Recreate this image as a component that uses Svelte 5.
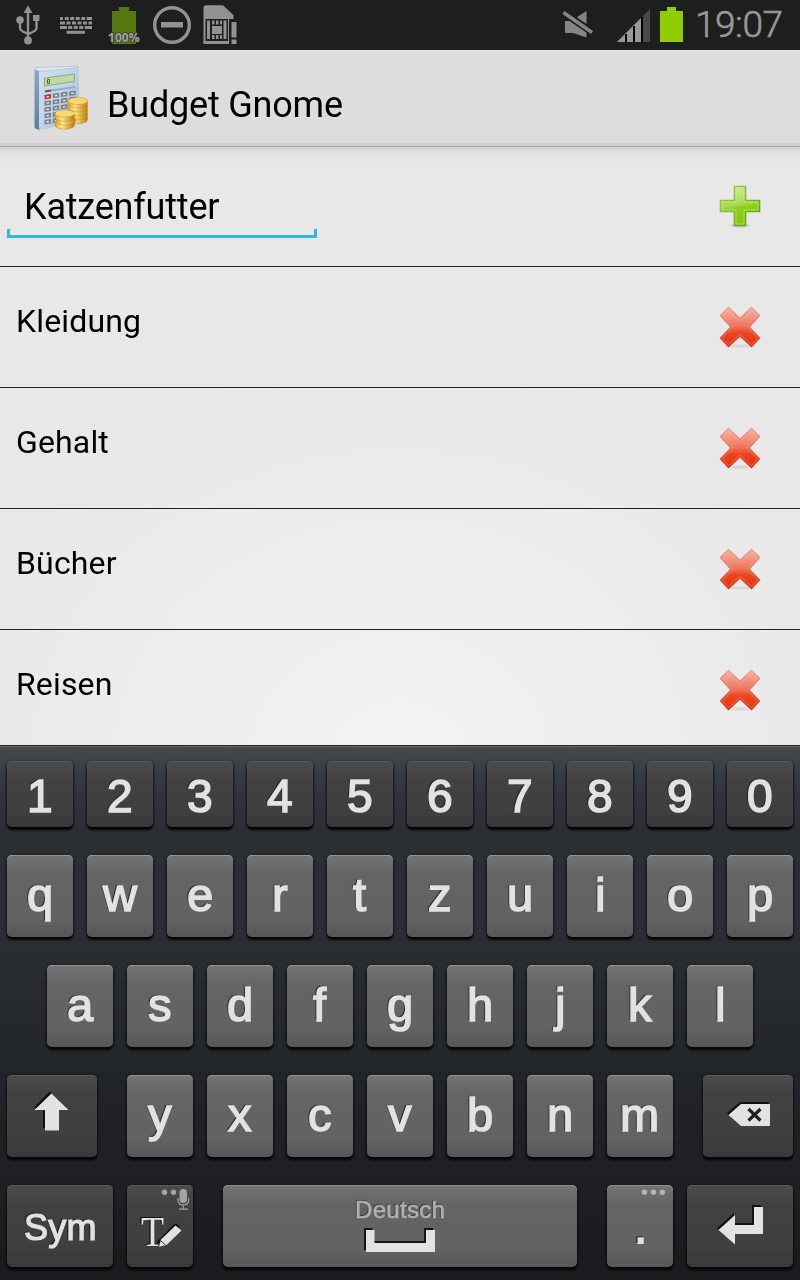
<script>
  const categories = ['Kleidung', 'Gehalt', 'Bücher', 'Reisen'];
  const digits = [...'1234567890'];
  const top = [...'qwertzuiop'];
  const home = [...'asdfghjkl'];
  const bottom = [...'yxcvbnm'];
  const calcRows = [97, 103.2, 109.5, 115.8, 122];
  const calcCols = [0, 1, 2, 3];
</script>

<div class="screen">
  <header class="status">
    <svg width="250" height="50" viewBox="0 0 250 50">
      <g fill="none" stroke="#929292" stroke-width="2.400">
        <path d="M28 10V40M20 20v8q0 2 2 3l6 3M36.500 19v9q0 2-2 3l-6 3" />
        <circle cx="172" cy="25" r="17.300" stroke-width="3.400" />
      </g>
      <g fill="#929292">
        <path d="M28 5.500l4.500 7.500h-9zM33 15h6.500v6H33z" />
        <circle cx="20" cy="20" r="3.800" /><circle cx="28" cy="40.500" r="3.900" />
        <path d="M161 22h22v5.500h-22z" />
      </g>
      <g stroke="#929292" stroke-width="3" fill="none">
        <path d="M60 18.500h32" stroke-dasharray="3 1.700 4 1.500 4 1.500 4 1.500 4 1.500 5.300 9" />
        <path d="M60 23h32" stroke-dasharray="5 1.500 4 1.500 4 1.500 4 1.500 4 1.500 3.500 9" />
        <path d="M60 27.500h32" stroke-dasharray="7 1.200 4 1.500 4 1.500 4 1.500 7.300 9" />
        <path d="M66.500 32.300h18.500" />
      </g>
      <path d="M119 7h10v4h7v33h-24V11h7z" fill="#57780e" />
      <text x="123.800" y="42" text-anchor="middle" class="pct">100%</text>
      <path d="M206 5.300h17l10.500 10V19H229v25h-23q-2.500 0-2.500-2V8q0-2.700 2.500-2.700z" fill="#929292" />
      <path d="M205.500 19h22.500v22h-22.500z" fill="#1e1e1e" />
      <g fill="#929292">
        <path d="M207 20.500h3v18.500h-3zM223.500 20.500h3v18.500h-3zM212 20.500h2.500v4H212zM216 20.500h2.500v4H216zM220 20.500h2v4h-2zM212 35h2.500v4H212zM216 35h2.500v4H216zM220 35h2v4h-2zM212 26h10v8h-10z" />
        <path d="M203.500 41h25.500v3h-25.500zM231.500 22h5v15.500h-5zM231.500 39.500h5V44h-5z" />
      </g>
    </svg>
    <svg class="right" width="250" height="50" viewBox="550 0 250 50">
      <path d="M565 21h6l15.500-10v26.500L573 33h-8z" fill="#858585" />
      <path d="M564 13l28 19" stroke="#1e1e1e" stroke-width="7" />
      <path d="M563.500 12.500L592 32.500" stroke="#858585" stroke-width="3.500" />
      <path d="M617 42l33-33v33z" fill="#484848" />
      <path d="M617 42l25-25v25z" fill="#999" />
      <path d="M625 34h2v8h-2zM633 26h2v16h-2zM641 17h2v25h-2z" fill="#000" />
      <path d="M667 7h9v4h7v31h-23V11h7z" fill="#8fcd00" />
      <text x="695" y="37" class="clock" textLength="88" lengthAdjust="spacing">19:07</text>
    </svg>
  </header>

  <div class="appbar">
    <svg class="logo" width="60" height="68" viewBox="30 64 60 68">
      <defs>
        <linearGradient id="body" x2="1" y2="1"><stop stop-color="#d3e1ef" /><stop offset=".5" stop-color="#c0d3e8" /><stop offset="1" stop-color="#8fafcf" /></linearGradient>
        <linearGradient id="side" y2="1" x2="0"><stop stop-color="#91a9c0" /><stop offset="1" stop-color="#5c7c9e" /></linearGradient>
        <linearGradient id="gold"><stop stop-color="#e1a528" /><stop offset=".35" stop-color="#ffe58a" /><stop offset="1" stop-color="#bd7d0a" /></linearGradient>
      </defs>
      <path d="M34.500 69.500l5 1.500v59l-4-1.500q-1-.5-1-2z" fill="url(#side)" />
      <path d="M39 70.500l38-3.500q2 0 2 2v53l-37 7.500q-3 .5-3-2z" fill="url(#body)" />
      <path d="M34.500 69.500q0-1.500 3-2l37.500-1.300q3 0 4 1.500L40 71.500z" fill="#dce9f3" stroke="#91abc2" stroke-width=".5" />
      <path d="M44.500 78l30-4v7.500l-30 4.500z" fill="#bfdba0" stroke="#809b71" stroke-width=".8" />
      <path d="M47.500 79.500l2-.3v4.300l-2 .3z" fill="none" stroke="#4c663a" />
      <path d="M45 91.500l30-4.500" stroke="#9ba9b8" stroke-width="2" />
      <path d="M45 91.500l6-1" stroke="#59616b" stroke-width="2" />
      {#each calcRows as y, r}
        {#each calcCols as c}
          <path d={`M${44.5 + c * 8.2} ${y - 2 - c * 1.2}l6.500-1v4.500l-6.500 1z`} fill={r === 0 && c === 0 ? '#d22b32' : '#7d828b'} />
          <path d={`M${46.5 + c * 8.2} ${y - c * 1.2}l2.500-.4`} stroke="#e8ebef" stroke-width="1.300" />
        {/each}
      {/each}
      <g fill="url(#gold)" stroke="#ba7d13" stroke-width=".4">
        {#each [119, 115, 111, 107, 103] as y}
          <path d={`M68 ${y - 2}v3c1 5 18 5 19.500 0v-3z`} />
        {/each}
        <ellipse cx="77.700" cy="101" rx="9.800" ry="3.600" fill="#f7d66b" />
        {#each [124.500, 120.500, 116.500] as y, i}
          <path d={`M${55 + (i % 2)} ${y - 2}v3c1 5 18 5 19.500 0v-3z`} />
        {/each}
        <ellipse cx="64.800" cy="113.500" rx="9.800" ry="3.600" fill="#f9da75" />
      </g>
    </svg>
    <h1>Budget Gnome</h1>
  </div>

  <main>
    <div class="row entry">
      <div class="field"><span>Katzenfutter</span></div>
      <svg class="action" width="44" height="48" viewBox="0 0 44 48">
        <defs>
          <linearGradient id="green" x1=".4" y1="0" x2=".6" y2="1"><stop stop-color="#d2ec91" /><stop offset=".45" stop-color="#a8d850" /><stop offset=".55" stop-color="#8bcf16" /><stop offset="1" stop-color="#80ca0c" /></linearGradient>
          <linearGradient id="rim" x2="1" y2="1"><stop stop-color="#a5cf58" /><stop offset="1" stop-color="#559b0b" /></linearGradient>
          <radialGradient id="shade"><stop stop-color="#777" stop-opacity=".55" /><stop offset="1" stop-color="#777" stop-opacity="0" /></radialGradient>
        </defs>
        <ellipse cx="22" cy="41.500" rx="12" ry="2.500" fill="url(#shade)" />
        <path d="M16.500 2.500h11v14h14v11h-14v14h-11v-14h-14v-11h14z" fill="url(#green)" stroke="url(#rim)" stroke-width="1.700" stroke-linejoin="round" />
        <path d="M18 4h8v14h14v8H26v14h-8V26H4v-8h14z" fill="none" stroke="#d7f09c" stroke-opacity=".55" />
      </svg>
    </div>
    {#each categories as name}
      <div class="row">
        <span class="name">{name}</span>
        <svg class="action" width="44" height="48" viewBox="0 0 44 48">
          <defs>
            <linearGradient id="red" x2="0" y2="1"><stop stop-color="#f9b6a7" /><stop offset=".48" stop-color="#ef745a" /><stop offset=".66" stop-color="#ea4520" /><stop offset="1" stop-color="#e92d08" /></linearGradient>
            <linearGradient id="redrim" x2="0" y2="1"><stop stop-color="#efa092" /><stop offset="1" stop-color="#ca3c27" /></linearGradient>
          </defs>
          <ellipse cx="22" cy="41" rx="18" ry="2.500" fill="url(#shade)" opacity=".4" />
          <path d="M10.500 2.500L22 13.500 33.500 2.500l8 8L31 22l10.500 11-8 8.500L22 31 10.500 41.500l-8-8.500L13 22 2.500 10.500z" fill="url(#red)" stroke="url(#redrim)" stroke-width="1.400" stroke-linejoin="round" />
          <path d="M10.500 4.500L22 15.500 33.500 4.500l6 6L29 22l10.500 11-6 6.500L22 29 10.500 39.500l-6-6.500L15 22 4.500 10.500z" fill="none" stroke="#ffc0ad" stroke-opacity=".3" />
        </svg>
      </div>
    {/each}
  </main>

  <section class="keyboard">
    <div class="keys digits">
      {#each digits as k}<div class="key dark"><span>{k}</span></div>{/each}
    </div>
    <div class="keys">
      {#each top as k}<div class="key"><span>{k}</span></div>{/each}
    </div>
    <div class="keys home">
      {#each home as k}<div class="key"><span>{k}</span></div>{/each}
    </div>
    <div class="keys spread">
      <div class="key dark shift">
        <svg width="90" height="82" viewBox="7 1075 90 82">
          <path d="M49.500 1091.500l17 16.500H57v20H43v-20h-9.500z" fill="#111" />
          <path d="M51.500 1093.500l17 16.500H59v20.500H45V1110h-10.500z" fill="#e2e2e2" />
        </svg>
      </div>
      <div class="group">
        {#each bottom as k}<div class="key"><span>{k}</span></div>{/each}
      </div>
      <div class="key dark shift">
        <svg width="90" height="82" viewBox="703 1075 90 82">
          <path d="M727 1113l13-11h28.500v3H741l-12.500 10z" fill="#111" />
          <path d="M728.500 1115l12.500-11h29v22h-29z" fill="#e2e2e2" />
          <path d="M748.500 1109l12 11.500M760.500 1109l-12 11.500" stroke="#222" stroke-width="3.200" />
        </svg>
      </div>
    </div>
    <div class="keys last">
      <div class="key dark wide"><span class="sym">Sym</span></div>
      <div class="key dark">
        <svg width="66" height="82" viewBox="127 1185 66 82">
          <g fill="#a4a4a4">
            <circle cx="164.500" cy="1192.300" r="2.700" /><circle cx="173.500" cy="1192.300" r="2.700" />
            <rect x="179.500" y="1189" width="7.500" height="14" rx="3.700" />
            <path d="M178 1198v2q0 5 5.300 5t5.300-5v-2M183.300 1205v4M179 1209.200h9" fill="none" stroke="#a4a4a4" stroke-width="1.200" />
          </g>
          <text class="tee shadow" x="139.500" y="1244.500" textLength="23" lengthAdjust="spacingAndGlyphs">T</text>
          <text class="tee" x="141" y="1246" textLength="23" lengthAdjust="spacingAndGlyphs">T</text>
          <path d="M156.500 1242l18-18 2-.5 3 3-18 19z" fill="#111" />
          <path d="M161 1239.500l14.500-14 6 5-15 14.500-7.500 1.800z" fill="#e2e2e2" />
          <path d="M160.500 1240.500l5.500 5" stroke="#333" stroke-width="1" />
        </svg>
      </div>
      <div class="key space">
        <span class="lang">Deutsch</span>
        <svg width="72" height="25" viewBox="364 1228 72 25">
          <path d="M364 1228h8.500v13H424v-13h9v22h-69z" fill="#151515" />
          <path d="M366 1230h8.500v13h51.500v-13h9v22h-69z" fill="#e2e2e2" />
        </svg>
      </div>
      <div class="key">
        <svg width="66" height="82" viewBox="607 1185 66 82">
          <g fill="#b4b4b4"><circle cx="644.500" cy="1192.300" r="2.700" /><circle cx="653.400" cy="1192.300" r="2.700" /><circle cx="662.300" cy="1192.300" r="2.700" /></g>
          <text class="dot shadow" x="639.300" y="1242.500">.</text>
          <text class="dot" x="640.500" y="1244">.</text>
        </svg>
      </div>
      <div class="key dark wide">
        <svg width="106" height="82" viewBox="687 1185 106 82">
          <path d="M717 1228l17-15v10h18v-18h9v26h-27v10z" fill="#111" />
          <path d="M718.500 1230l16.500-15v10h19v-18h9v27h-28v10.500z" fill="#e2e2e2" />
        </svg>
      </div>
    </div>
  </section>
</div>

<style>
  :global(body) { margin: 0; }
  .screen { width: 800px; height: 1280px; overflow: hidden; display: flex; flex-direction: column; font-family: Roboto, sans-serif; color: #000; background: #e8e8e8; }
  svg { display: block; flex: none; }
  h1, .name, .field span, .key span, .key svg { will-change: transform; }
  .status { height: 50px; flex: none; display: flex; justify-content: space-between; background: #1e1e1e; }
  .pct { font: 700 12px "Open Sans", sans-serif; fill: #a5a5a5; stroke: #333; stroke-width: 1.5px; paint-order: stroke; }
  .clock { font: 300 37px Roboto, sans-serif; fill: #999; stroke: #999; stroke-width: .6px; }
  .appbar { box-sizing: border-box; height: 97px; flex: none; display: flex; align-items: flex-start; padding: 14px 0 0 30px; background: linear-gradient(#e4e4e4, #dddddd 2px, #dddddd 93px, #cfcfcf 93px, #cfcfcf 96px, #a2a2a2 96px); }
  h1 { margin: 20px 0 0 17px; font-weight: 400; font-size: 36px; line-height: 42px; letter-spacing: -.2px; }
  main { height: 598px; flex: none; overflow: hidden; background: linear-gradient(#cecece, #e1e1e1 5px, transparent 16px), radial-gradient(ellipse 480px 400px at 400px 610px, #f3f3f3, #e8e8e8); }
  .row { box-sizing: border-box; height: 121px; display: flex; justify-content: space-between; padding: 38px 38px 0 16px; border-bottom: 1px solid #222; }
  .entry { height: 120px; padding: 37px 38px 0 7px; }
  .name { font-size: 32px; line-height: 38px; margin-top: -3px; letter-spacing: .15px; }
  .field { box-sizing: border-box; width: 310px; height: 54px; padding-left: 17px; font-size: 36px; line-height: 46px; letter-spacing: -.2px; background: linear-gradient(#33b5e5, #33b5e5) 0 100% / 100% 3px no-repeat, linear-gradient(#33b5e5, #33b5e5) 0 100% / 3px 9px no-repeat, linear-gradient(#33b5e5, #33b5e5) 100% 100% / 3px 9px no-repeat; }
  .field span { display: block; }
  .keyboard { box-sizing: border-box; flex: 1; padding: 15px 7px 0; border-top: 1px solid #222; box-shadow: inset 0 1px #656b70; background: linear-gradient(#454a4e, #363b40 28px, #2b2f34 80px, #2a2e33 200px, #212429 330px, #1e1f22 440px, #191a1c); font-family: "Liberation Sans", sans-serif; }
  .keys { display: flex; height: 82px; gap: 14px; margin-bottom: 28px; }
  .digits { height: 66px; }
  .home { padding-left: 40px; }
  .spread { justify-content: space-between; }
  .group { display: flex; gap: 14px; }
  .key { width: 66px; height: 82px; flex: none; display: flex; flex-direction: column; align-items: center; justify-content: center; border-radius: 5px; color: #e2e2e2; background: linear-gradient(#747474, #646464 20px, #636363 62px, #575757); box-shadow: inset 0 1px #929292, 0 3px 2px #070707, 0 1px 3px 1px rgba(0, 0, 0, .4); }
  .dark { background: linear-gradient(#4b4b4b, #414141 20px, #404040 70%, #393939); box-shadow: inset 0 1px #5a5a5a, 0 3px 2px #070707, 0 1px 3px 1px rgba(0, 0, 0, .4); }
  .key span { font-size: 47px; line-height: 48px; margin-top: -3px; -webkit-text-stroke: 1.6px #e2e2e2; text-shadow: -1.5px -1.5px 1px #1a1a1a; }
  .digits .key { height: 66px; }
  .digits .key span { font-size: 46px; margin-top: 4px; }
  .shift { width: 90px; }
  .wide { width: 106px; }
  .key .sym { font-size: 36px; margin: 4px 0 0 1px; letter-spacing: .3px; -webkit-text-stroke-width: 1.2px; }
  .space { width: 354px; margin: 0 16px; justify-content: flex-start; }
  .key .lang { font-size: 24px; line-height: 26px; margin: 12px 0 5px; letter-spacing: .3px; color: #b0b0b0; -webkit-text-stroke: .6px #b0b0b0; text-shadow: -1px -1px 1px #333; }
  .tee { font: 43px "Liberation Serif", serif; fill: #e2e2e2; }
  .dot { font: 700 44px "Liberation Sans", sans-serif; fill: #e2e2e2; text-anchor: middle; }
  .shadow { fill: #161616; }
</style>
